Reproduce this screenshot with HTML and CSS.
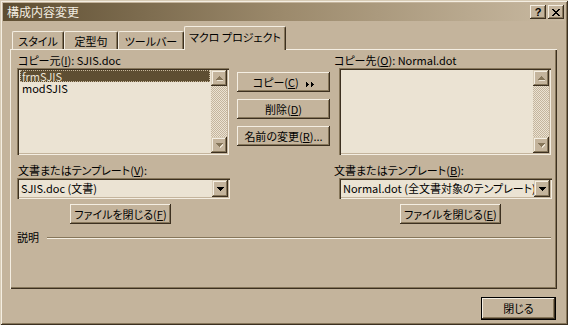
FILE: index.html
```html
<!DOCTYPE html>
<html lang="ja">
<head>
  <meta charset="UTF-8">
  <title>構成内容変更</title>
  <link rel="stylesheet" href="styles.css">
</head>
<body>

  <div class="window">
    <div class="titlebar">
      <span class="title">構成内容変更</span>
      <div class="title-btns">
        <span class="tbtn help">?</span>
        <span class="tbtn">
          <svg width="8" height="7" viewBox="0 0 8 7" shape-rendering="crispEdges">
            <path d="M0 0h2v1h-2zM6 0h2v1h-2zM1 1h2v1h-2zM5 1h2v1h-2zM2 2h4v1h-4zM3 3h2v1h-2zM2 4h4v1h-4zM1 5h2v1h-2zM5 5h2v1h-2zM0 6h2v1h-2zM6 6h2v1h-2z" fill="#000"/>
          </svg>
        </span>
      </div>
    </div>

    <div class="content">
      <div class="tabs">
        <div class="tab w1">スタイル</div>
        <div class="tab w2">定型句</div>
        <div class="tab w3">ツールバー</div>
        <div class="tab w4 active">マクロ プロジェクト</div>
      </div>

      <div class="panel">
        <div class="row-lists">
          <div class="col-left">
            <div class="label">コピー元(<u>I</u>): SJIS.doc</div>
            <div class="listbox">
              <div class="items">
                <div class="item selected">frmSJIS</div>
                <div class="item">modSJIS</div>
              </div>
              <div class="scrollbar">
                <span class="sbtn">
                  <svg width="7" height="5" viewBox="0 0 7 5" shape-rendering="crispEdges">
                    <path d="M3 0h1v1h1v1h1v1h1v1h-7v-1h1v-1h1v-1h1z" fill="#ece4d4" transform="translate(1 1)"/>
                    <path d="M3 0h1v1h1v1h1v1h1v1h-7v-1h1v-1h1v-1h1z" fill="#86765a"/>
                  </svg>
                </span>
                <span class="track"></span>
                <span class="sbtn">
                  <svg width="7" height="5" viewBox="0 0 7 5" shape-rendering="crispEdges">
                    <path d="M0 0h7v1h-1v1h-1v1h-1v1h-1v-1h-1v-1h-1v-1h-1z" fill="#ece4d4" transform="translate(1 1)"/>
                    <path d="M0 0h7v1h-1v1h-1v1h-1v1h-1v-1h-1v-1h-1v-1h-1z" fill="#86765a"/>
                  </svg>
                </span>
              </div>
            </div>
          </div>

          <div class="actions">
            <button class="btn">コピー(<u>C</u>)
              <svg class="arrows" width="8" height="5" viewBox="0 0 8 5" shape-rendering="crispEdges">
                <path d="M0 0h1v1h1v1h1v1h-1v1h-1v1h-1zM5 0h1v1h1v1h1v1h-1v1h-1v1h-1z" fill="#000"/>
              </svg>
            </button>
            <button class="btn">削除(<u>D</u>)</button>
            <button class="btn">名前の変更(<u>R</u>)...</button>
          </div>

          <div class="col-right">
            <div class="label">コピー先(<u>O</u>): Normal.dot</div>
            <div class="listbox indent">
              <div class="items"></div>
              <div class="scrollbar">
                <span class="sbtn">
                  <svg width="7" height="5" viewBox="0 0 7 5" shape-rendering="crispEdges">
                    <path d="M3 0h1v1h1v1h1v1h1v1h-7v-1h1v-1h1v-1h1z" fill="#ece4d4" transform="translate(1 1)"/>
                    <path d="M3 0h1v1h1v1h1v1h1v1h-7v-1h1v-1h1v-1h1z" fill="#86765a"/>
                  </svg>
                </span>
                <span class="track"></span>
                <span class="sbtn">
                  <svg width="7" height="5" viewBox="0 0 7 5" shape-rendering="crispEdges">
                    <path d="M0 0h7v1h-1v1h-1v1h-1v1h-1v-1h-1v-1h-1v-1h-1z" fill="#ece4d4" transform="translate(1 1)"/>
                    <path d="M0 0h7v1h-1v1h-1v1h-1v1h-1v-1h-1v-1h-1v-1h-1z" fill="#86765a"/>
                  </svg>
                </span>
              </div>
            </div>
          </div>
        </div>

        <div class="row-docs">
          <div class="col-left">
            <div class="label">文書またはテンプレート(<u>V</u>):</div>
            <div class="combo">
              <span class="combo-text">SJIS.doc (文書)</span>
              <span class="dropbtn">
                <svg width="7" height="4" viewBox="0 0 7 4" shape-rendering="crispEdges">
                  <path d="M0 0h7v1h-1v1h-1v1h-1v1h-1v-1h-1v-1h-1v-1h-1z" fill="#000"/>
                </svg>
              </span>
            </div>
            <button class="btn file-btn left">ファイルを閉じる(<u>F</u>)</button>
          </div>

          <div class="col-right">
            <div class="label">文書またはテンプレート(<u>B</u>):</div>
            <div class="combo indent">
              <span class="combo-text">Normal.dot (全文書対象のテンプレート)</span>
              <span class="dropbtn">
                <svg width="7" height="4" viewBox="0 0 7 4" shape-rendering="crispEdges">
                  <path d="M0 0h7v1h-1v1h-1v1h-1v1h-1v-1h-1v-1h-1v-1h-1z" fill="#000"/>
                </svg>
              </span>
            </div>
            <button class="btn file-btn right">ファイルを閉じる(<u>E</u>)</button>
          </div>
        </div>

        <div class="row-desc">
          <span>説明</span>
          <span class="etched"></span>
        </div>
      </div>

      <div class="footer">
        <button class="btn default">閉じる</button>
      </div>
    </div>
  </div>

</body>
</html>
```

FILE: styles.css
```css
* {
  box-sizing: border-box;
}

body {
  margin: 0;
  background: #c4b49c;
  font-family: "Noto Sans CJK JP", sans-serif;
  font-size: 11px;
  font-variant-east-asian: proportional-width;
  font-feature-settings: "palt" 1;
  color: #000;
}

u {
  text-underline-offset: 1px;
}

.window {
  width: 568px;
  height: 325px;
  padding: 3px;
  display: flex;
  flex-direction: column;
  background: #c4b49c;
  box-shadow: inset 1px 1px 0 #d8ccb6, inset -1px -1px 0 #3c3020,
              inset 2px 2px 0 #f4eee2, inset -2px -2px 0 #86765a;
}

/* title bar */
.titlebar {
  height: 18px;
  display: flex;
  align-items: center;
  justify-content: space-between;
  padding: 0 1px 0 4px;
  background: linear-gradient(to right, #5e4e32, #9c8a6c 50%, #c8b9a1);
  color: #f4eee2;
  font-size: 12px;
  line-height: 16px;
}

.title-btns {
  display: flex;
  gap: 2px;
}

.tbtn {
  width: 16px;
  height: 14px;
  display: flex;
  align-items: center;
  justify-content: center;
  background: #c4b49c;
  color: #000;
  box-shadow: inset -1px -1px 0 #3c3020, inset 1px 1px 0 #f4eee2,
              inset -2px -2px 0 #86765a;
}

.tbtn.help {
  font: bold 11px "Liberation Sans", sans-serif;
  padding-bottom: 1px;
}

/* tabs */
.content {
  flex: 1;
  padding: 6px 8px 0 7px;
  display: flex;
  flex-direction: column;
}

.tabs {
  height: 22px;
  display: flex;
  align-items: flex-end;
  padding-left: 2px;
}

.tab {
  height: 18px;
  display: flex;
  align-items: center;
  justify-content: center;
  white-space: nowrap;
  border-radius: 2px 2px 0 0;
  border-top: 1px solid #f4eee2;
  border-left: 1px solid #f4eee2;
  border-right: 1px solid #3c3020;
  box-shadow: inset -1px 0 0 #86765a;
  background: #c4b49c;
  line-height: 14px;
}

.w1 { width: 52px; }
.w2 { width: 54px; }
.w3 { width: 66px; }
.w4 { width: 102px; }

.tab.active {
  height: 24px;
  margin-bottom: -1px;
  padding-bottom: 3px;
  position: relative;
  z-index: 1;
}

.panel {
  height: 240px;
  padding: 4px 0 0 7px;
  box-shadow: inset 1px 1px 0 #f4eee2, inset -1px -1px 0 #3c3020,
              inset -2px -2px 0 #86765a;
}

.label {
  height: 15px;
  line-height: 15px;
  padding-left: 1px;
  white-space: nowrap;
}

.row-lists {
  display: flex;
}

.col-left {
  width: 212px;
}

.col-right {
  width: 218px;
  margin-left: 3px;
}

.indent {
  margin-left: 6px;
}

/* list boxes */
.listbox {
  width: 212px;
  height: 87px;
  padding: 2px;
  display: flex;
  background: #ebe3d3;
  box-shadow: inset 1px 1px 0 #86765a, inset 2px 2px 0 #3c3020,
              inset -1px -1px 0 #f4eee2, inset -2px -2px 0 #c4b49c;
}

.items {
  flex: 1;
  padding: 0 1px;
}

.item {
  height: 12px;
  line-height: 12px;
  padding-left: 2px;
}

.item.selected {
  background: #5e4e32;
  color: #ece4d4;
  outline: 1px dotted #c8b89c;
  outline-offset: -1px;
}

.scrollbar {
  width: 16px;
  display: flex;
  flex-direction: column;
}

.sbtn, .dropbtn {
  width: 16px;
  height: 16px;
  display: flex;
  align-items: center;
  justify-content: center;
  background: #c4b49c;
  box-shadow: inset -1px -1px 0 #3c3020, inset 1px 1px 0 #d8ccb6,
              inset -2px -2px 0 #86765a, inset 2px 2px 0 #f4eee2;
}

.track {
  flex: 1;
  background: repeating-conic-gradient(#c4b49c 0 25%, #ebe3d3 0 50%) 0 0 / 2px 2px;
}

/* buttons */
.btn {
  height: 20px;
  padding: 0;
  border: none;
  background: #c4b49c;
  font: inherit;
  color: #000;
  line-height: 18px;
  white-space: nowrap;
  box-shadow: inset -1px -1px 0 #3c3020, inset 1px 1px 0 #f4eee2,
              inset -2px -2px 0 #86765a;
}

.actions {
  width: 93px;
  margin-left: 8px;
  padding-top: 19px;
  display: flex;
  flex-direction: column;
  gap: 7px;
}

.arrows {
  margin-left: 5px;
}

/* document combos */
.row-docs {
  display: flex;
  margin-top: 8px;
}

.row-docs .col-left {
  width: 213px;
}

.row-docs .col-right {
  margin-left: 103px;
}

.combo {
  width: 213px;
  height: 21px;
  padding: 2px;
  display: flex;
  background: #ebe3d3;
  box-shadow: inset 1px 1px 0 #86765a, inset 2px 2px 0 #3c3020,
              inset -1px -1px 0 #f4eee2, inset -2px -2px 0 #c4b49c;
}

.combo-text {
  flex: 1;
  padding-left: 2px;
  line-height: 17px;
  white-space: nowrap;
  overflow: hidden;
}

.dropbtn {
  height: 17px;
}

.file-btn {
  width: 101px;
  margin-top: 5px;
}

.file-btn.left { margin-left: 53px; }
.file-btn.right { margin-left: 67px; }

.row-desc {
  width: 534px;
  margin-top: 6px;
  height: 15px;
  line-height: 15px;
  display: flex;
  align-items: center;
  gap: 8px;
}

.etched {
  flex: 1;
  height: 2px;
  border-top: 1px solid #86765a;
  border-bottom: 1px solid #f4eee2;
}

/* footer */
.footer {
  display: flex;
  justify-content: flex-end;
  padding: 8px 1px 0 0;
}

.btn.default {
  width: 75px;
  height: 23px;
  line-height: 21px;
  box-shadow: inset 0 0 0 1px #000, inset -2px -2px 0 #3c3020,
              inset 2px 2px 0 #f4eee2, inset -3px -3px 0 #86765a;
}
```
